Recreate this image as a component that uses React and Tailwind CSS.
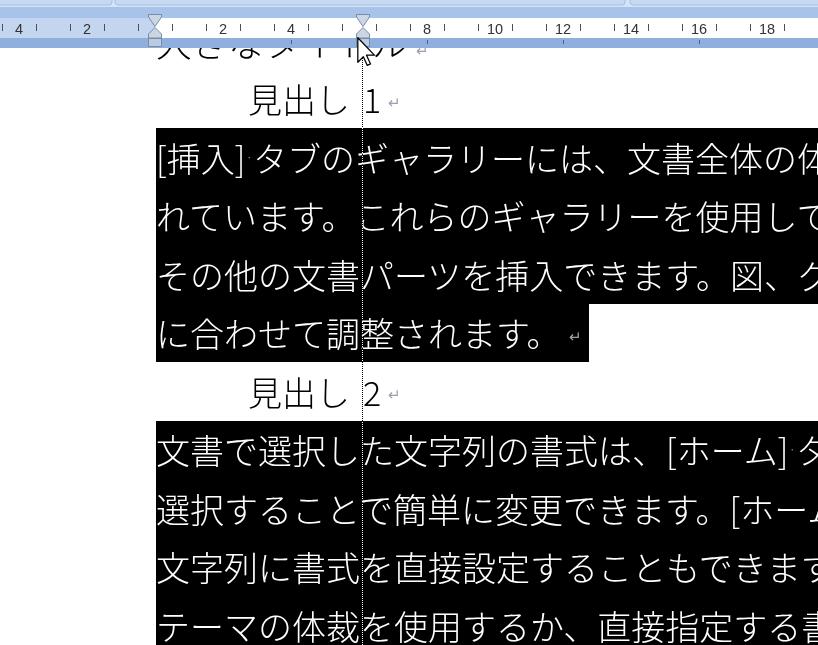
import React from "react";

const NUMS = [
  { x: 19, t: "4" },
  { x: 87, t: "2" },
  { x: 223, t: "2" },
  { x: 291, t: "4" },
  { x: 427, t: "8" },
  { x: 495, t: "10" },
  { x: 563, t: "12" },
  { x: 631, t: "14" },
  { x: 699, t: "16" },
  { x: 767, t: "18" },
];

const TICKS = Array.from({ length: 25 }, (_, i) => 2 + 34 * i);
const TABS = [291, 427, 563, 699];

function Marker({ cx }) {
  return (
    <g stroke="#7a8da6" strokeWidth="1">
      <path d={`M${cx - 6.5} 14.5 H${cx + 6.5} V17 L${cx} 26.5 L${cx - 6.5} 17 Z`} fill="#cbd6e5" />
      <path d={`M${cx} 27.5 L${cx + 6.5} 34 V38 H${cx - 6.5} V34 Z`} fill="#cbd6e5" />
      <rect x={cx - 6.5} y={38.5} width={13} height={8} fill="#bccbdf" />
    </g>
  );
}

function Ruler() {
  return (
    <div className="relative z-10 h-[48px] w-full">
      <svg width="818" height="48" className="block">
        <rect x="0" y="0" width="818" height="7" fill="#d5e3f5" />
        <rect x="-6" y="-4" width="118" height="9" rx="3" fill="#c6d9f1" stroke="#a5c0e4" />
        <rect x="115" y="-4" width="510" height="9" rx="3" fill="#c6d9f1" stroke="#a5c0e4" />
        <rect x="630" y="-4" width="200" height="9" rx="3" fill="#c6d9f1" stroke="#a5c0e4" />
        <rect x="0" y="7" width="818" height="11" fill="#a8c3ea" />
        <rect x="0" y="18" width="155" height="20" fill="#c4d6ef" />
        <rect x="155" y="18" width="663" height="20" fill="#ffffff" />
        <rect x="0" y="38" width="818" height="10" fill="#8fb0de" />
        {TICKS.map((x) => (
          <rect key={x} x={x} y="24" width="1" height="7" fill="#505050" />
        ))}
        {TABS.map((x) => (
          <rect key={x} x={x} y="40" width="1" height="4" fill="#4d6487" />
        ))}
        {NUMS.map((n) => (
          <text
            key={n.x}
            x={n.x}
            y="34"
            textAnchor="middle"
            fontSize="14.5"
            fontFamily="Liberation Sans, Arial, sans-serif"
            fill="#333333"
          >
            {n.t}
          </text>
        ))}
        <Marker cx={155} />
        <Marker cx={363} />
      </svg>
    </div>
  );
}

function Hw({ children, w = "w-[12px]" }) {
  return <span className={`inline-block text-center ${w}`}>{children}</span>;
}

function Sp() {
  return <span className="inline-block w-[13px] text-center text-[14px] text-gray-400">·</span>;
}

function Para() {
  return <span className="ml-[8px] mt-[8px] text-[15px] text-gray-400 font-['DejaVu_Sans',sans-serif]">↵</span>;
}

function Band({ children, w = "" }) {
  return (
    <div className="h-[58.5px] pl-[156px]">
      <div className={`flex h-full items-center whitespace-nowrap bg-black text-white ${w}`}>{children}</div>
    </div>
  );
}

function Heading({ n }) {
  return (
    <div className="flex h-[58.5px] items-center whitespace-nowrap pl-[248px] text-black">
      <span>見出し</span>
      <span className="inline-block w-[13px]" />
      <Hw w="w-[17px]">{n}</Hw>
      <Para />
    </div>
  );
}

export default function App() {
  return (
    <div className="relative h-[645px] w-[818px] overflow-hidden bg-white">
      <Ruler />
      <div className="-mt-[37px] text-[34px] font-light font-['Noto_Sans_CJK_JP','Noto_Sans_CJK_SC',sans-serif]">
        <div className="flex h-[58.5px] items-end whitespace-nowrap pb-[11px] pl-[156px] text-[36px] leading-none text-black">
          大きなタイトル
          <Para />
        </div>
        <Heading n="1" />
        <Band>
          <Hw>[</Hw>挿入<Hw>]</Hw>
          <Sp />
          タブのギャラリーには、文書全体の体裁
        </Band>
        <Band>れています。これらのギャラリーを使用して、表</Band>
        <Band>その他の文書パーツを挿入できます。図、グラフ</Band>
        <Band w="w-[433px]">
          に合わせて調整されます。
          <Para />
        </Band>
        <Heading n="2" />
        <Band>
          文書で選択した文字列の書式は、<Hw>[</Hw>ホーム<Hw>]</Hw>
          <Sp />
          タブのクイック
        </Band>
        <Band>
          選択することで簡単に変更できます。<Hw>[</Hw>ホーム
        </Band>
        <Band>文字列に書式を直接設定することもできます</Band>
        <Band>テーマの体裁を使用するか、直接指定する書式</Band>
      </div>
      <div className="pointer-events-none absolute left-[362px] top-[48px] h-[597px] w-0 border-l border-dotted border-white mix-blend-difference" />
      <svg
        className="absolute left-[357px] top-[37px] z-20"
        width="19"
        height="30"
        viewBox="0 0 12 19"
      >
        <path
          d="M0.5 0.5 V16 L4 12.5 L6.5 18 L8.5 17 L6 11.5 H11 Z"
          fill="#ffffff"
          stroke="#000000"
          strokeWidth="0.8"
          strokeLinejoin="round"
        />
      </svg>
    </div>
  );
}
